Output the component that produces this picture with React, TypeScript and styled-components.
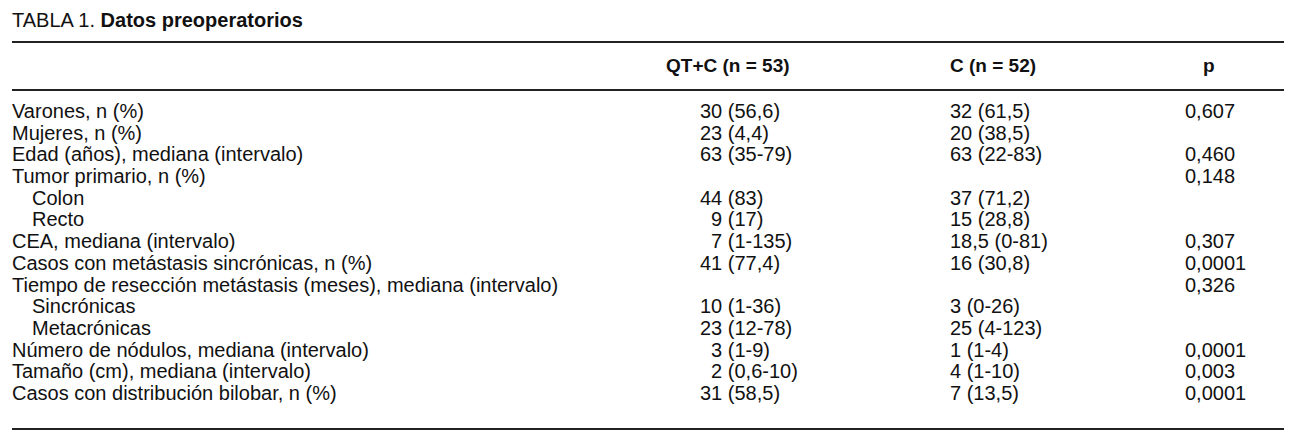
import React from "react";
import styled, { createGlobalStyle } from "styled-components";

const GlobalStyle = createGlobalStyle`
  body {
    margin: 0;
    background: #fff;
    color: #111;
    font-family: "Liberation Sans", Arial, Helvetica, sans-serif;
  }
`;

type Row = {
  label: string;
  indent?: boolean;
  qtc?: string;
  c?: string;
  p?: string;
};

const rows: Row[] = [
  { label: "Varones, n (%)", qtc: "30 (56,6)", c: "32 (61,5)", p: "0,607" },
  { label: "Mujeres, n (%)", qtc: "23 (4,4)", c: "20 (38,5)" },
  { label: "Edad (años), mediana (intervalo)", qtc: "63 (35-79)", c: "63 (22-83)", p: "0,460" },
  { label: "Tumor primario, n (%)", p: "0,148" },
  { label: "Colon", indent: true, qtc: "44 (83)", c: "37 (71,2)" },
  { label: "Recto", indent: true, qtc: "\u20079 (17)", c: "15 (28,8)" },
  { label: "CEA, mediana (intervalo)", qtc: "\u20077 (1-135)", c: "18,5 (0-81)", p: "0,307" },
  { label: "Casos con metástasis sincrónicas, n (%)", qtc: "41 (77,4)", c: "16 (30,8)", p: "0,0001" },
  { label: "Tiempo de resección metástasis (meses), mediana (intervalo)", p: "0,326" },
  { label: "Sincrónicas", indent: true, qtc: "10 (1-36)", c: "3 (0-26)" },
  { label: "Metacrónicas", indent: true, qtc: "23 (12-78)", c: "25 (4-123)" },
  { label: "Número de nódulos, mediana (intervalo)", qtc: "\u20073 (1-9)", c: "1 (1-4)", p: "0,0001" },
  { label: "Tamaño (cm), mediana (intervalo)", qtc: "\u20072 (0,6-10)", c: "4 (1-10)", p: "0,003" },
  { label: "Casos con distribución bilobar, n (%)", qtc: "31 (58,5)", c: "7 (13,5)", p: "0,0001" },
];

const App = () => {
  return (
    <>
      <GlobalStyle />
      <Page>
        <Caption>
          TABLA 1. <strong>Datos preoperatorios</strong>
        </Caption>
        <Table>
          <HeadRow>
            <span />
            <HeadCell>QT+C (n = 53)</HeadCell>
            <HeadCell>C (n = 52)</HeadCell>
            <HeadCell $pad={18}>p</HeadCell>
          </HeadRow>
          <Body>
            {rows.map((r) => (
              <BodyRow key={r.label}>
                <Label $indent={r.indent}>{r.label}</Label>
                <Value>{r.qtc}</Value>
                <Value>{r.c}</Value>
                <Value>{r.p}</Value>
              </BodyRow>
            ))}
          </Body>
        </Table>
      </Page>
    </>
  );
};
export default App;

const Page = styled.div`
  width: 1272px;
  padding: 9px 12px 0;
  font-size: 20px;
`;

const Caption = styled.div`
  line-height: 22px;
  padding-bottom: 10px;
  strong {
    font-weight: 700;
  }
`;

const Table = styled.div`
  border-top: 2px solid #222;
  border-bottom: 2px solid #222;
`;

const HeadRow = styled.div`
  display: grid;
  grid-template-columns: 654px 284px 235px 1fr;
  padding: 12px 0;
  line-height: 22px;
  font-weight: 700;
  font-size: 19px;
  border-bottom: 2px solid #222;
`;

const HeadCell = styled.div<{ $pad?: number }>`
  padding-left: ${(p) => p.$pad ?? 0}px;
  white-space: nowrap;
`;

const Body = styled.div`
  padding: 10px 0 23px;
`;

const BodyRow = styled.div`
  display: grid;
  grid-template-columns: 688px 250px 235px 1fr;
  line-height: 21.7px;
  height: 21.7px;
`;

const Label = styled.div<{ $indent?: boolean }>`
  padding-left: ${(p) => (p.$indent ? 20 : 0)}px;
  white-space: nowrap;
`;

const Value = styled.div`
  white-space: pre;
`;
